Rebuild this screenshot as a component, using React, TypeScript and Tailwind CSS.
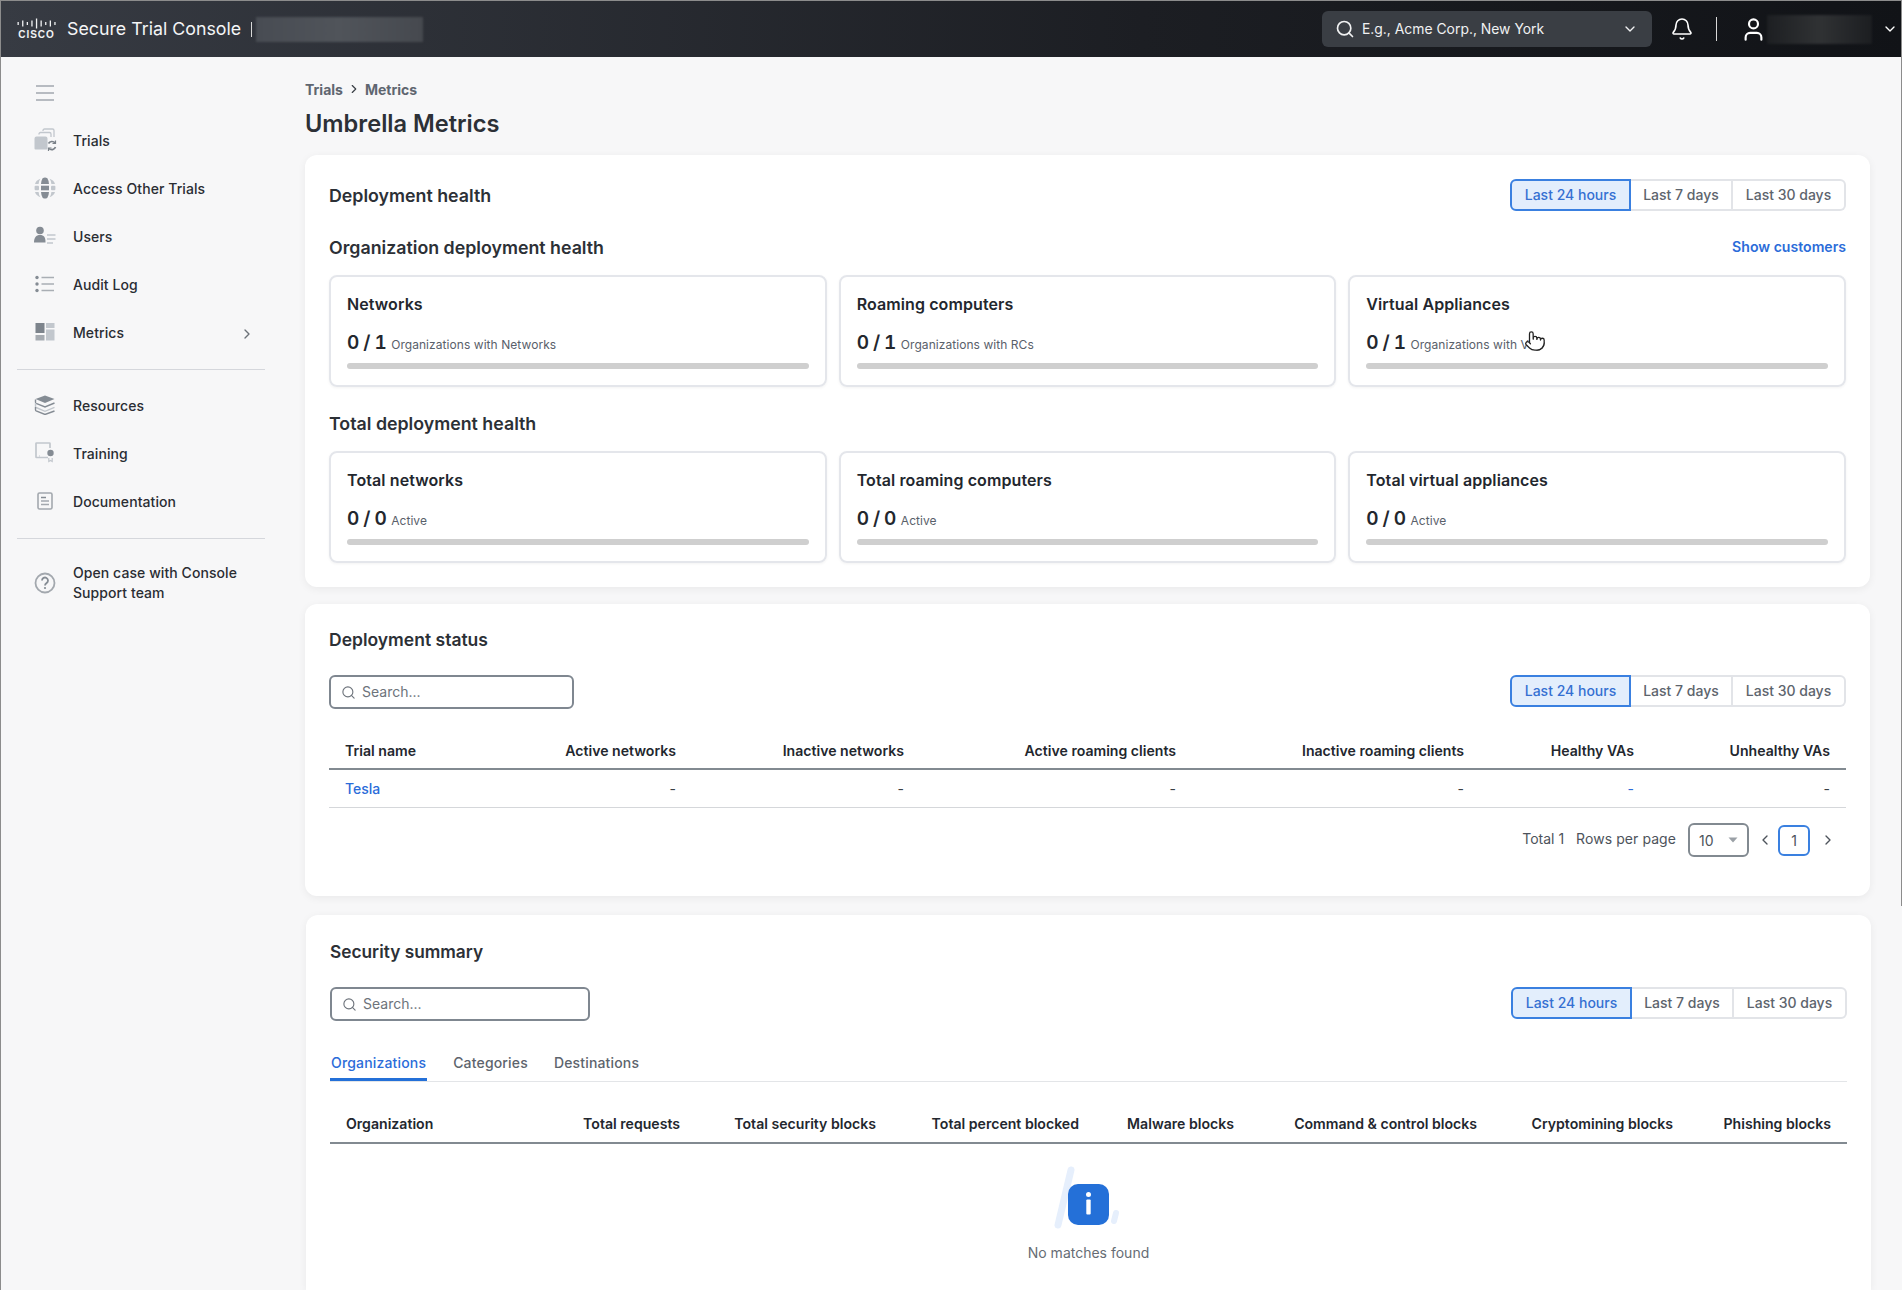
import React from "react";
import { Search, ChevronDown, ChevronRight, ChevronLeft, Bell, User, Pointer } from "lucide-react";

const D = "#858c94";
const L = "#c2c7cd";

function IconMenu() {
  return (
    <svg width="22" height="22" viewBox="0 0 22 22" fill="none" stroke="#a3a8ae" strokeWidth="1.6">
      <path d="M2 4h18M2 11h18M2 18h18" />
    </svg>
  );
}
function IconTrials() {
  return (
    <svg width="24" height="24" viewBox="0 0 24 24" fill="none">
      <path d="M1.5 10.5a2 2 0 0 1 2-2h9a2 2 0 0 1 2 2v10a1 1 0 0 1-1 1H2.5a1 1 0 0 1-1-1z" fill={L} />
      <path d="M6 6.6V6a1.5 1.5 0 0 1 1.5-1.5h9A1.5 1.5 0 0 1 18 6v3" stroke={L} strokeWidth="1.3" />
      <path d="M10 2.9V2.5A1.5 1.5 0 0 1 11.5 1h8A1.5 1.5 0 0 1 21 2.5V9" stroke={L} strokeWidth="1.3" />
      <path d="M15.5 15.5a4 4 0 0 1 6.5-.6M22.500 19a4 4 0 0 1-6.600 1.500" stroke="#7a8188" strokeWidth="1.700" />
      <path d="M22.500 12.500v3h-3M15.500 23v-3h3" stroke="#7a8188" strokeWidth="1.200" />
    </svg>
  );
}
function IconGlobe() {
  return (
    <svg width="22" height="22" viewBox="0 0 22 22" fill={D}>
      <path d="M8.600 1.300 Q11 -0.500 13.400 1.300 Q14.800 3.700 15 7H7Q7.200 3.700 8.600 1.300z" />
      <path d="M6.400 1.800Q4.800 4 4.600 7H1Q2 3.400 6.400 1.800z" fill={L} />
      <path d="M15.600 1.800Q17.200 4 17.400 7H21Q20 3.400 15.600 1.800z" fill={L} />
      <rect x="7" y="8.700" width="8" height="4.600" />
      <rect x="0.600" y="8.700" width="4.400" height="4.600" rx="1" fill={L} />
      <rect x="17" y="8.700" width="4.400" height="4.600" rx="1" fill={L} />
      <path d="M7 15h8Q14.800 18.300 13.400 20.700Q11 22.500 8.600 20.700Q7.200 18.300 7 15z" />
      <path d="M4.600 15H1Q2 18.600 6.400 20.200Q4.800 18 4.600 15z" fill={L} />
      <path d="M17.400 15H21Q20 18.600 15.600 20.200Q17.200 18 17.400 15z" fill={L} />
    </svg>
  );
}
function IconUsers() {
  return (
    <svg width="24" height="20" viewBox="0 0 24 20" fill="none">
      <circle cx="7" cy="4.500" r="3.800" fill={D} />
      <path d="M1 16.500c0-5 2-7.500 6-7.500s5.500 2 5.500 7.500z" fill={D} />
      <path d="M14 9h8.500M14 13h8.500M14 17h6" stroke={L} strokeWidth="1.700" />
    </svg>
  );
}
function IconAudit() {
  return (
    <svg width="20" height="18" viewBox="0 0 20 18" fill="none">
      <circle cx="2" cy="2.500" r="1.700" fill={D} />
      <circle cx="2" cy="9" r="1.700" fill={D} />
      <circle cx="2" cy="15.500" r="1.700" fill={D} />
      <path d="M6.500 2.500H19M6.500 9H19M6.500 15.500H19" stroke="#a9aeb4" strokeWidth="1.500" />
    </svg>
  );
}
function IconMetrics() {
  return (
    <svg width="20" height="18" viewBox="0 0 20 18">
      <rect x="0.500" y="0" width="9" height="10" fill="#7d848c" />
      <rect x="11" y="0" width="8.500" height="5" fill={L} />
      <rect x="11" y="6.500" width="8.500" height="11" fill={L} />
      <rect x="0.500" y="12" width="9" height="5.500" fill="#a6abb1" />
    </svg>
  );
}
function IconResources() {
  return (
    <svg width="22" height="20" viewBox="0 0 22 20" fill="none">
      <path d="M11 0.500 20.500 4 11 8 1.500 4z" fill={D} />
      <path d="M1.500 4.500v2.500c0 .500 0 1 .600 1.300L11 12l9.500-4" stroke={D} strokeWidth="1.400" />
      <path d="M1.500 8v3.200c0 .500 0 1 .600 1.300L11 16.300l9.500-4" stroke={L} strokeWidth="1.400" />
      <path d="M1.500 12v2.500c0 .500 0 1 .600 1.300L11 19.500l9.500-3.500" stroke={D} strokeWidth="1.400" />
    </svg>
  );
}
function IconTraining() {
  return (
    <svg width="20" height="22" viewBox="0 0 20 22" fill="none">
      <path d="M13 15.500H1.500a.500.500 0 0 1-.500-.500V1.500a.500.500 0 0 1 .500-.500h13a.500.500 0 0 1 .500.500V6" stroke={L} strokeWidth="1.700" />
      <path d="M4 14h1" stroke={L} strokeWidth="1" />
      <circle cx="15.500" cy="11" r="3.200" fill={D} />
      <path d="M13.800 16v3.500l1.700-1 1.700 1V16" stroke={L} strokeWidth="1.200" />
    </svg>
  );
}
function IconDoc() {
  return (
    <svg width="16" height="18" viewBox="0 0 16 18" fill="none">
      <rect x="1" y="1" width="14" height="16" rx="1.500" stroke="#a3a8ae" strokeWidth="1.600" />
      <path d="M4 5.500h5" stroke={D} strokeWidth="1.500" />
      <path d="M4 9h8M4 12.500h8" stroke="#a3a8ae" strokeWidth="1.500" />
    </svg>
  );
}
function IconHelp() {
  return (
    <svg width="22" height="22" viewBox="0 0 22 22" fill="none">
      <circle cx="11" cy="11" r="9.500" stroke="#a3a8ae" strokeWidth="1.800" />
      <path d="M8 8.500a3 3 0 1 1 4.500 2.600c-1 .6-1.500 1.100-1.500 2.400" stroke="#858c94" strokeWidth="1.800" />
      <circle cx="11" cy="16" r="1.100" fill="#858c94" />
    </svg>
  );
}
function CiscoBars() {
  const h = [3, 6, 3, 6, 10, 6, 3, 6, 3];
  return (
    <svg width="39" height="11" viewBox="0 0 39 11" fill="#f1f2f3">
      {h.map((v, i) => (
        <rect key={i} x={i * 4.600 + 0.500} y={(11 - v) / 2} width="1.300" height={v} />
      ))}
    </svg>
  );
}
function EmptyIcon() {
  return (
    <svg width="70" height="65" viewBox="0 0 70 65" fill="none">
      <path d="M18 4 5 59" stroke="#e6effc" strokeWidth="7" strokeLinecap="round" />
      <path d="M63 47 61 55" stroke="#e6effc" strokeWidth="6" strokeLinecap="round" />
      <rect x="15" y="18" width="41" height="41" rx="10" fill="#2470d8" />
      <circle cx="35.500" cy="28.500" r="2.500" fill="#fff" />
      <rect x="33.300" y="33.500" width="4.400" height="15" rx="1" fill="#fff" />
    </svg>
  );
}

const navA: [string, React.ReactNode][] = [
  ["Trials", <IconTrials />],
  ["Access Other Trials", <IconGlobe />],
  ["Users", <IconUsers />],
  ["Audit Log", <IconAudit />],
  ["Metrics", <IconMetrics />],
];
const navB: [string, React.ReactNode][] = [
  ["Resources", <IconResources />],
  ["Training", <IconTraining />],
  ["Documentation", <IconDoc />],
];

function NavRow({ label, icon, chevron }: { label: string; icon: React.ReactNode; chevron?: boolean }) {
  return (
    <div className="flex h-12 items-center text-[14px] font-medium tracking-[0.005em] text-[#2a2d33]">
      <span className="flex w-14 items-center justify-center">{icon}</span>
      <span className="flex-1">{label}</span>
      {chevron && <ChevronRight size={16} strokeWidth={2} className="mr-[10px] mt-[3px] text-[#6b7178]" />}
    </div>
  );
}

function Sidebar() {
  return (
    <aside className="w-[304px] shrink-0 pt-3 pl-[16px]">
      <div className="w-[248px]">
        <div className="flex h-[47px] w-14 items-center justify-center">
          <IconMenu />
        </div>
        {navA.map(([l, i]) => (
          <NavRow key={l} label={l} icon={i} chevron={l === "Metrics"} />
        ))}
        <div className="mt-[13px] border-t border-[#d5d7dc]" />
        <div className="mt-[11px]">
          {navB.map(([l, i]) => (
            <NavRow key={l} label={l} icon={i} />
          ))}
        </div>
        <div className="mt-[13px] border-t border-[#d5d7dc]" />
        <div className="mt-6 flex items-center text-[14px] font-medium leading-5 tracking-[0.005em] text-[#2a2d33]">
          <span className="flex w-14 items-center justify-center">
            <IconHelp />
          </span>
          <span className="w-[178px]">Open case with Console Support team</span>
        </div>
      </div>
    </aside>
  );
}

function Header() {
  return (
    <header className="flex h-[57px] shrink-0 items-center border-t border-[#8c8c8c] bg-linear-to-r from-[#373b43] via-[#1c1e23] via-60% to-[#111317] text-white">
      <div className="ml-[16px] flex w-[39px] flex-col items-center">
        <CiscoBars />
        <span className="mt-[1px] font-['Liberation_Sans',sans-serif] text-[10px] leading-[10px] font-bold tracking-[0.1em] text-[#f1f2f3]">
          CISCO
        </span>
      </div>
      <span className="ml-[11px] text-[17.8px] text-[#f4f5f6]">Secure Trial Console</span>
      <span className="ml-[10px] h-[15px] w-px bg-[#d8d8d8]" />
      <span className="ml-[4px] h-[25px] w-[167px] bg-linear-to-r from-[#484c53] via-[#50545a] to-[#46494f] blur-[1px]" />
      <div className="ml-auto flex h-9 w-[330px] items-center rounded-md bg-[#3a3e44] pl-[13px] pr-[14px] text-[13.9px] text-[#f0f1f2]">
        <Search size={20} strokeWidth={2} />
        <span className="ml-[7px] flex-1">E.g., Acme Corp., New York</span>
        <ChevronDown size={16} strokeWidth={2} />
      </div>
      <Bell size={24} strokeWidth={1.6} className="ml-[18px]" />
      <span className="ml-[22px] h-6 w-px bg-[#d8d8d8]" />
      <User size={27} strokeWidth={1.9} className="ml-[23px]" />
      <span className="h-[29px] w-[105px] bg-linear-to-r from-[#1d1f22] via-[#303234] to-[#1c1e21] blur-[1px]" />
      <ChevronDown size={16} strokeWidth={2} className="ml-[10px] mr-[4px]" />
    </header>
  );
}

function RangeButtons() {
  return (
    <div className="flex h-8 text-[14px] font-medium text-[#5d646d]">
      <span className="flex w-[121px] items-center justify-center rounded-l-md border-2 border-[#3a80e0] bg-[#e3eefc] pb-px text-[#3570d2]">
        Last 24 hours
      </span>
      <span className="flex w-[102px] items-center justify-center border-y-2 border-r-2 border-[#e2e4e8] pb-px">Last 7 days</span>
      <span className="flex w-[113px] items-center justify-center rounded-r-md border-y-2 border-r-2 border-[#e2e4e8] pb-px">
        Last 30 days
      </span>
    </div>
  );
}

function MetricCard({ title, count, sub }: { title: string; count: string; sub: string }) {
  return (
    <div className="h-[112px] rounded-lg border-2 border-[#e4e6eb] px-4 pt-[15px] shadow-[0_1px_3px_rgba(0,0,0,0.05)]">
      <div className="text-[16px] leading-6 font-semibold tracking-[0.006em] text-[#23272e]">{title}</div>
      <div className="mt-[13px] flex h-7 items-baseline">
        <span className="text-[19px] leading-7 font-semibold tracking-[-0.03em] text-[#23272e] tabular-nums">{count}</span>
        <span className="ml-[5px] text-[12px] tracking-[0.005em] text-[#59606a]">{sub}</span>
      </div>
      <div className="mt-[6px] h-[6px] rounded-[3px] bg-[#cfcfcf]" />
    </div>
  );
}

function SectionTitle({ children, size }: { children: React.ReactNode; size?: string }) {
  return <h2 className={`${size ?? "text-[17.8px]"} leading-7 font-semibold text-[#2c3036]`}>{children}</h2>;
}

function SearchBox({ width }: { width: string }) {
  return (
    <div className={`flex h-[34px] ${width} items-center rounded-md border-2 border-[#7f8790] pl-[10px] text-[14px] text-[#6d737b]`}>
      <Search size={15} strokeWidth={1.8} />
      <span className="ml-[6px] pb-px">Search...</span>
    </div>
  );
}

function DeploymentHealth() {
  return (
    <section className="rounded-xl bg-white px-6 pt-6 pb-6 shadow-[0_2px_8px_rgba(0,0,0,0.06)]">
      <div className="flex items-center justify-between">
        <div className="pt-[2px]">
          <SectionTitle>Deployment health</SectionTitle>
        </div>
        <RangeButtons />
      </div>
      <div className="mt-[23px] flex h-7 items-center justify-between">
        <SectionTitle>Organization deployment health</SectionTitle>
        <span className="pb-[3px] text-[14.1px] font-semibold text-[#2b6cd9]">Show customers</span>
      </div>
      <div className="mt-[13px] grid grid-cols-3 gap-3">
        <MetricCard title="Networks" count="0 / 1" sub="Organizations with Networks" />
        <MetricCard title="Roaming computers" count="0 / 1" sub="Organizations with RCs" />
        <MetricCard title="Virtual Appliances" count="0 / 1" sub="Organizations with V" />
      </div>
      <div className="mt-[23px] h-7">
        <SectionTitle>Total deployment health</SectionTitle>
      </div>
      <div className="mt-[13px] grid grid-cols-3 gap-3">
        <MetricCard title="Total networks" count="0 / 0" sub="Active" />
        <MetricCard title="Total roaming computers" count="0 / 0" sub="Active" />
        <MetricCard title="Total virtual appliances" count="0 / 0" sub="Active" />
      </div>
    </section>
  );
}

const statusCols = ["Trial name", "Active networks", "Inactive networks", "Active roaming clients", "Inactive roaming clients", "Healthy VAs", "Unhealthy VAs"];

function DeploymentStatus() {
  return (
    <section className="mt-[17px] h-[292px] rounded-xl bg-white px-6 pt-[22px] shadow-[0_2px_8px_rgba(0,0,0,0.06)]">
      <SectionTitle size="text-[17.5px]">Deployment status</SectionTitle>
      <div className="mt-[21px] flex items-start justify-between">
        <SearchBox width="w-[245px]" />
        <RangeButtons />
      </div>
      <div className="mt-6 grid h-[37px] grid-cols-[160px_203px_228px_272px_288px_170px_196px] items-center border-b-2 border-[#828a91] text-[14.1px] font-semibold text-[#23272e]">
        {statusCols.map((c, i) => (
          <span key={c} className={i === 0 ? "pl-4" : "whitespace-nowrap pr-4 text-right"}>
            {c}
          </span>
        ))}
      </div>
      <div className="grid h-[38px] grid-cols-[160px_203px_228px_272px_288px_170px_196px] items-center border-b border-[#d5d7da] text-[14px] text-[#3a3f46]">
        <span className="pl-4 font-medium text-[#2b6cd9]">Tesla</span>
        {[0, 1, 2, 3, 4, 5].map((i) => (
          <span key={i} className={`pr-4 text-right ${i === 4 ? "text-[#2b6cd9]" : ""}`}>
            -
          </span>
        ))}
      </div>
      <div className="mt-[15px] flex h-[34px] items-center text-[14px] text-[#4d535b]">
        <span className="ml-auto pb-[3px]">Total 1</span>
        <span className="ml-[12px] pb-[3px] tracking-[0.005em]">Rows per page</span>
        <span className="ml-[12px] flex h-[34px] w-[61px] items-center justify-between rounded-md border-2 border-[#828a91] pl-[9px] pr-[9px]">
          10
          <svg width="10" height="6" viewBox="0 0 10 6" fill="#9aa0a6">
            <path d="M0.500 0.500h9L5 5.500z" />
          </svg>
        </span>
        <ChevronLeft size={16} strokeWidth={2} className="ml-[8px]" />
        <span className="ml-[5px] flex h-[31px] w-8 items-center justify-center rounded-md border-2 border-[#3a80e0]">1</span>
        <ChevronRight size={16} strokeWidth={2} className="ml-[10px] mr-[10px]" />
      </div>
    </section>
  );
}

const secCols = ["Organization", "Total requests", "Total security blocks", "Total percent blocked", "Malware blocks", "Command & control blocks", "Cryptomining blocks", "Phishing blocks"];

function SecuritySummary() {
  return (
    <section className="mt-[19px] ml-px -mr-px min-h-0 flex-1 rounded-t-xl bg-white px-6 pt-[23px] shadow-[0_2px_8px_rgba(0,0,0,0.06)]">
      <SectionTitle size="text-[17.3px]">Security summary</SectionTitle>
      <div className="mt-[21px] flex items-start justify-between">
        <SearchBox width="w-[260px]" />
        <RangeButtons />
      </div>
      <div className="mt-6 flex h-[37px] gap-[26px] border-b border-[#e3e5e8] text-[14px] font-medium tracking-[0.012em] text-[#5d646d]">
        <span className="h-9 border-b-[3px] border-[#2470d8] px-px pt-[7px] text-[#2b6cd9]">Organizations</span>
        <span className="pt-[7px]">Categories</span>
        <span className="pt-[7px]">Destinations</span>
      </div>
      <div className="mt-6 grid h-[38px] grid-cols-[160px_206px_196px_203px_155px_243px_196px_158px] items-center border-b-2 border-[#828a91] pb-[1px] text-[14.1px] font-semibold text-[#23272e]">
        {secCols.map((c, i) => (
          <span key={c} className={i === 0 ? "pl-4" : "whitespace-nowrap pr-4 text-right"}>
            {c}
          </span>
        ))}
      </div>
      <div className="mt-[22px] flex flex-col items-center">
        <div className="-ml-[2px]">
          <EmptyIcon />
        </div>
        <span className="mt-[12px] text-[14px] leading-5 text-[#666c74]">No matches found</span>
      </div>
    </section>
  );
}

export default function App() {
  return (
    <div className="relative flex h-[1290px] w-[1902px] flex-col overflow-hidden border-l border-[#8c8c8c] bg-[#f7f7f8] font-[Inter,sans-serif]">
      <Header />
      <div className="flex min-h-0 flex-1">
        <Sidebar />
        <main className="flex w-[1565px] flex-col">
          <nav className="mt-[22px] flex h-5 items-center text-[14px] font-bold text-[#5f6670]">
            <span>Trials</span>
            <ChevronRight size={14} strokeWidth={2} className="mx-[4px] text-[#3a3f46]" />
            <span>Metrics</span>
          </nav>
          <h1 className="mt-[9px] text-[23.6px] leading-8 font-semibold text-[#2c3036]">Umbrella Metrics</h1>
          <div className="mt-[15px] flex min-h-0 flex-1 flex-col">
            <DeploymentHealth />
            <DeploymentStatus />
            <SecuritySummary />
          </div>
        </main>
      </div>
      <Pointer size={22} strokeWidth={1.4} fill="#ffffff" className="absolute top-[330px] left-[1523px] text-[#222]" />
      <div className="absolute top-0 right-0 h-[906px] w-px bg-[#8c8c8c]" />
    </div>
  );
}
